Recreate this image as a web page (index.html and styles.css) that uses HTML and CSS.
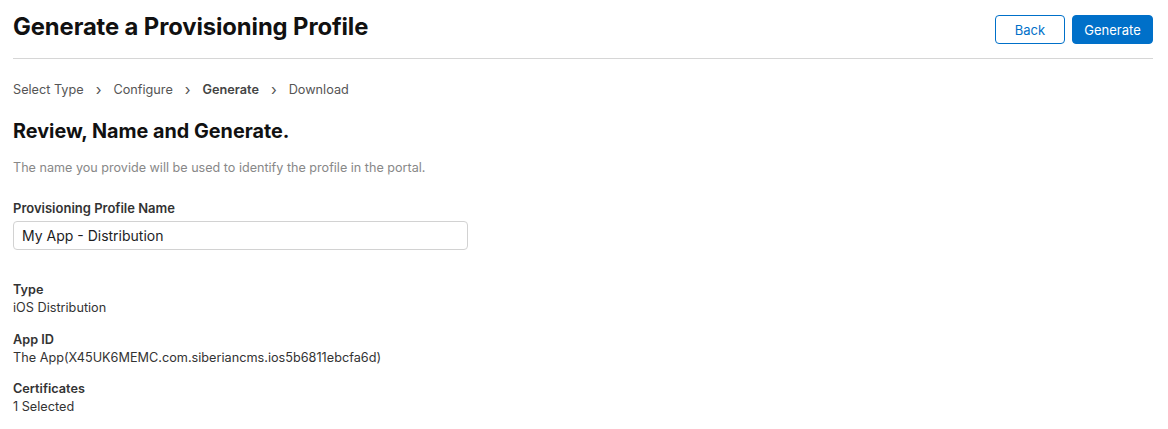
FILE: index.html
```html
<!DOCTYPE html>
<html>
<head>
<meta charset="utf-8">
<link rel="stylesheet" href="styles.css">
</head>
<body>
<div class="page">
  <header class="header">
    <h1 class="title">Generate a Provisioning Profile</h1>
    <div class="actions">
      <button class="btn btn-outline">Back</button>
      <button class="btn btn-primary">Generate</button>
    </div>
  </header>
  <nav class="steps">
    <span class="step">Select Type</span>
    <span class="chev">&#x203A;</span>
    <span class="step">Configure</span>
    <span class="chev">&#x203A;</span>
    <span class="step current">Generate</span>
    <span class="chev">&#x203A;</span>
    <span class="step">Download</span>
  </nav>
  <h2 class="subtitle">Review, Name and Generate.</h2>
  <p class="desc">The name you provide will be used to identify the profile in the portal.</p>
  <label class="label">Provisioning Profile Name</label>
  <input class="input" type="text" value="My App - Distribution">
  <dl class="details">
    <div class="item"><dt>Type</dt><dd>iOS Distribution</dd></div>
    <div class="item"><dt>App ID</dt><dd>The App(X45UK6MEMC.com.siberiancms.ios5b6811ebcfa6d)</dd></div>
    <div class="item"><dt>Certificates</dt><dd>1 Selected</dd></div>
  </dl>
</div>
</body>
</html>
```
FILE: styles.css
```css
* { box-sizing: border-box; }
html, body { margin: 0; padding: 0; background: #fff; }
body { font-family: Inter, "Noto Sans", sans-serif; color: #1d1d1f; }
.page { padding: 0 15px 0 13px; }
.header {
  display: flex;
  justify-content: space-between;
  align-items: flex-start;
  height: 59px;
  border-bottom: 1px solid #d6d6d6;
  padding-top: 12px;
}
.title { margin: 0; font-size: 23.8px; line-height: 29px; font-weight: 700; color: #111; letter-spacing: -0.1px; }
.actions { display: flex; gap: 7px; padding-top: 3px; }
.btn {
  font-family: inherit;
  font-size: 13px;
  height: 29px;
  border-radius: 4px;
  padding: 0 10px;
  cursor: pointer;
}
.btn-outline { background: #fff; color: #0070c9; border: 1px solid #0070c9; width: 70px; }
.btn-primary { background: #0070c9; color: #fff; border: 1px solid #0070c9; width: 81px; }
.steps {
  display: flex;
  align-items: center;
  gap: 12px;
  margin-top: 22px;
  font-size: 12.7px;
  color: #555;
  height: 16px;
}
.step.current { font-weight: 600; color: #444; }
.chev { font-size: 15px; color: #555; }
.subtitle { margin: 22px 0 0; font-size: 19.8px; font-weight: 700; color: #111; }
.desc { margin: 17px 0 0; font-size: 12.6px; color: #888; }
.label { display: block; margin-top: 25px; font-size: 13px; font-weight: 600; color: #333; }
.input {
  display: block;
  margin-top: 5px;
  width: 455px;
  height: 29px;
  border: 1px solid #d2d2d2;
  border-radius: 4px;
  padding: 0 8px;
  font-family: inherit;
  font-size: 14px;
  color: #1d1d1f;
}
.details { margin: 32px 0 0; }
.item { margin-bottom: 15.5px; }
dt { font-size: 12.7px; line-height: 16px; font-weight: 600; color: #333; }
dd { margin: 2px 0 0; font-size: 12.7px; line-height: 16px; color: #333; }
```
